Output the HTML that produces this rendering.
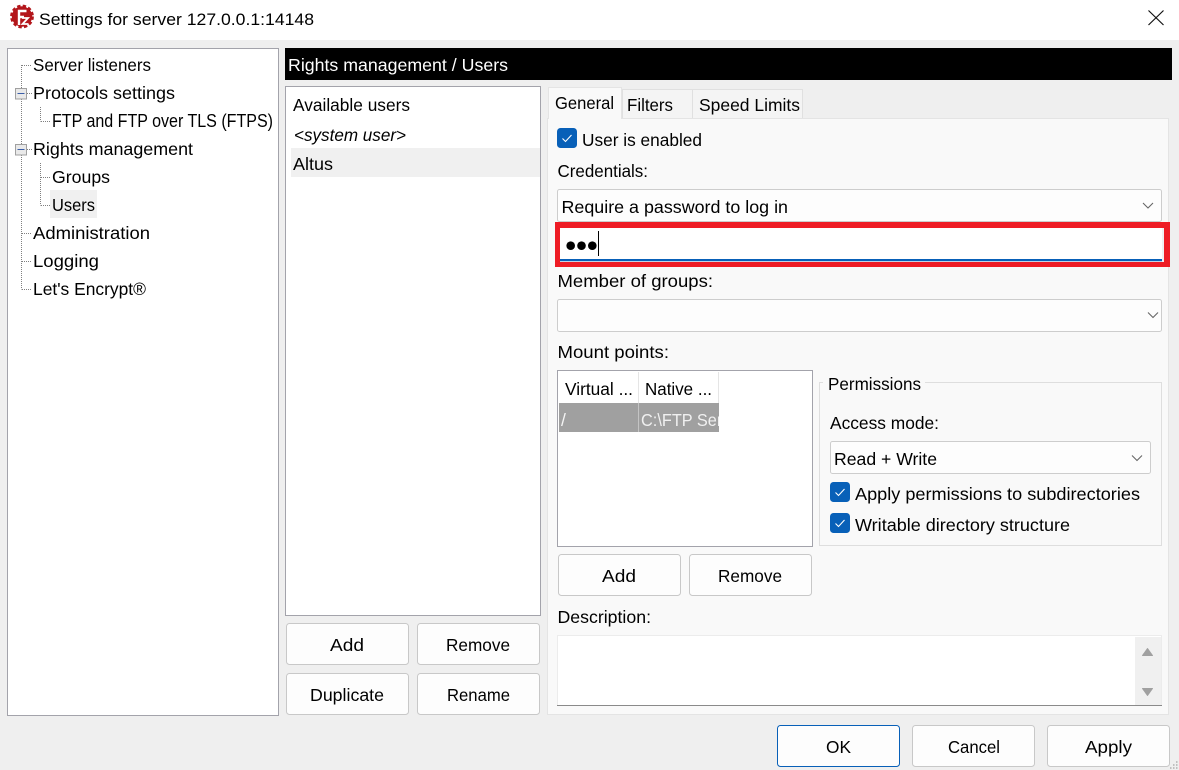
<!DOCTYPE html>
<html><head><meta charset="utf-8"><title>Settings for server 127.0.0.1:14148</title>
<style>
html,body{margin:0;padding:0;width:1179px;height:770px;overflow:hidden;background:#efefef}
svg{display:block}
text{font-family:"Liberation Sans",sans-serif;font-size:17.6px;fill:#000}
.b{fill:#fdfdfd;stroke:#c8c8c8;stroke-width:1}
.dd{fill:#fdfdfd;stroke:#cdcdcd;stroke-width:1}
.ch{fill:none;stroke:#666;stroke-width:1.1}
.ck{fill:none;stroke:#fff;stroke-width:1.1}
.dot{stroke:#808080;stroke-width:1;stroke-dasharray:1 1;fill:none}
.lst{fill:#fff;stroke:#a3a3ab;stroke-width:1}
</style></head><body>
<svg width="1179" height="770" viewBox="0 0 1179 770" xmlns="http://www.w3.org/2000/svg">
<rect width="1179" height="770" fill="#efefef"/>
<rect width="1179" height="40" fill="#fff"/>
<!-- logo -->
<circle cx="22" cy="16.5" r="10.2" fill="#b3161b"/>
<circle cx="22" cy="16.5" r="10.8" fill="none" stroke="#b3161b" stroke-width="2.2" stroke-dasharray="3.4 2.3"/>
<path d="M19 25V11h7.500M19 17h5" fill="none" stroke="#fff" stroke-width="2.400"/>
<path d="M22 18h6l-5.500 6h6" fill="none" stroke="#fff" stroke-width="1.800"/>
<text x="39" y="25" textLength="275" lengthAdjust="spacingAndGlyphs" style="font-size:17px">Settings for server 127.0.0.1:14148</text>
<path d="M1148.5 10.5L1163.5 25M1163.5 10.5L1148.5 25" stroke="#111" stroke-width="1.2" fill="none"/>

<!-- tree -->
<rect class="lst" x="7.5" y="48.5" width="271" height="667"/>
<path class="dot" d="M21.5 65V88M21.5 99V144M21.5 155V289.5M22 65.5h10M27 93.5h5M22 233.5h10M22 261.5h10M22 289.5h10M27 149.5h5"/>
<path class="dot" d="M40.5 107V121.5M41 121.5h10M40.5 163V205.5M41 177.5h10M41 205.5h10"/>
<rect x="15.5" y="88.5" width="11" height="10.5" fill="#e9e9e9" stroke="#a0a0a0"/>
<path d="M17.5 93.5h7" stroke="#3b5ea8" stroke-width="1"/>
<rect x="15.5" y="144.5" width="11" height="10.5" fill="#e9e9e9" stroke="#a0a0a0"/>
<path d="M17.5 149.5h7" stroke="#3b5ea8" stroke-width="1"/>
<rect x="50" y="190" width="47" height="28" fill="#f0f0f0"/>
<text x="33" y="71" textLength="118" lengthAdjust="spacingAndGlyphs">Server listeners</text>
<text x="33" y="99" textLength="142" lengthAdjust="spacingAndGlyphs">Protocols settings</text>
<text x="52" y="127" textLength="221" lengthAdjust="spacingAndGlyphs" style="font-size:18.200px">FTP and FTP over TLS (FTPS)</text>
<text x="33" y="155" textLength="160" lengthAdjust="spacingAndGlyphs">Rights management</text>
<text x="52" y="183" textLength="58" lengthAdjust="spacingAndGlyphs">Groups</text>
<text x="52" y="211" textLength="43" lengthAdjust="spacingAndGlyphs">Users</text>
<text x="33" y="239" textLength="117" lengthAdjust="spacingAndGlyphs">Administration</text>
<text x="33" y="267" textLength="66" lengthAdjust="spacingAndGlyphs">Logging</text>
<text x="33" y="295" textLength="113" lengthAdjust="spacingAndGlyphs">Let's Encrypt®</text>

<!-- header -->
<rect x="285" y="48" width="887" height="32" fill="#000"/>
<text x="288" y="71" textLength="220" lengthAdjust="spacingAndGlyphs" style="fill:#fff">Rights management / Users</text>

<!-- user list -->
<rect class="lst" x="285.5" y="86.5" width="255" height="529"/>
<rect x="291" y="148" width="249" height="29" fill="#f0f0f0"/>
<text x="293" y="111" textLength="117" lengthAdjust="spacingAndGlyphs">Available users</text>
<text x="294" y="141" textLength="112" lengthAdjust="spacingAndGlyphs" style="font-style:italic">&lt;system user&gt;</text>
<text x="293" y="170" textLength="40" lengthAdjust="spacingAndGlyphs">Altus</text>

<rect class="b" x="286.5" y="623.5" width="122" height="41" rx="3"/>
<rect class="b" x="417.5" y="623.5" width="122" height="41" rx="3"/>
<rect class="b" x="286.5" y="673.5" width="122" height="41" rx="3"/>
<rect class="b" x="417.5" y="673.5" width="122" height="41" rx="3"/>
<text x="330" y="651" textLength="34" lengthAdjust="spacingAndGlyphs">Add</text>
<text x="446" y="651" textLength="64" lengthAdjust="spacingAndGlyphs">Remove</text>
<text x="310" y="701" textLength="74" lengthAdjust="spacingAndGlyphs">Duplicate</text>
<text x="447" y="701" textLength="63" lengthAdjust="spacingAndGlyphs">Rename</text>

<!-- tabs -->
<rect x="547.5" y="118.5" width="621" height="596" fill="#f9f9f9" stroke="#e4e4e4"/>
<path d="M622.5 118V89.5H692.5V118M692.5 118V89.5H802.5V118" fill="#f4f4f4" stroke="#e0e0e0"/>
<path d="M548.5 119V87.5H621.5V119" fill="#f9f9f9" stroke="#e4e4e4"/>
<rect x="549" y="117" width="72" height="3" fill="#f9f9f9"/>
<text x="555" y="109" textLength="59" lengthAdjust="spacingAndGlyphs">General</text>
<text x="627" y="111" textLength="46" lengthAdjust="spacingAndGlyphs">Filters</text>
<text x="699" y="111" textLength="101" lengthAdjust="spacingAndGlyphs">Speed Limits</text>

<!-- user enabled -->
<rect x="557" y="128" width="20" height="20" rx="3.5" fill="#0860b8"/>
<path class="ck" d="M562.5 138.5l3 3 6-6.5"/>
<text x="582" y="146" textLength="120" lengthAdjust="spacingAndGlyphs">User is enabled</text>
<text x="557.500" y="177" textLength="90.500" lengthAdjust="spacingAndGlyphs">Credentials:</text>

<rect class="dd" x="557.5" y="189.5" width="604" height="32" rx="2"/>
<text x="561.500" y="213" textLength="226.500" lengthAdjust="spacingAndGlyphs">Require a password to log in</text>
<path class="ch" d="M1143 203l5 5 5-5"/>

<!-- password -->
<rect x="555" y="222" width="615" height="45" fill="#ee1c25"/>
<rect x="560" y="228" width="604" height="34" fill="#f0f0f2"/>
<rect x="560" y="228" width="602" height="32" fill="#fff"/>
<rect x="560" y="259" width="602" height="2.2" fill="#0860b8"/>
<circle cx="570.7" cy="245.7" r="4.3"/><circle cx="581.5" cy="245.7" r="4.3"/><circle cx="592.3" cy="245.7" r="4.3"/>
<rect x="598" y="231" width="1" height="25" fill="#000"/>

<text x="557.500" y="287" textLength="155.500" lengthAdjust="spacingAndGlyphs">Member of groups:</text>
<rect class="dd" x="557.5" y="299.5" width="604" height="32" rx="2"/>
<path class="ch" d="M1148 312.500l5 5 5-5"/>

<text x="557.500" y="358" textLength="111.500" lengthAdjust="spacingAndGlyphs">Mount points:</text>
<rect class="lst" x="557.5" y="370.5" width="255" height="176"/>
<path d="M638.500 372V403M718.500 372V403" stroke="#e5e5e5"/>
<text x="565" y="395" textLength="68" lengthAdjust="spacingAndGlyphs">Virtual ...</text>
<text x="645" y="395" textLength="67" lengthAdjust="spacingAndGlyphs">Native ...</text>
<rect x="559" y="403" width="160" height="29" fill="#a0a0a0"/>
<path d="M638.500 403V432" stroke="#c4c4c4"/>
<text x="561" y="426" style="fill:#f4f4f4">/</text>
<svg x="640" y="403" width="79" height="29"><text x="1" y="23" textLength="104" lengthAdjust="spacingAndGlyphs" style="fill:#f0f0f0">C:\FTP Server</text></svg>

<rect class="b" x="558.500" y="554.500" width="122" height="41" rx="3"/>
<rect class="b" x="689.500" y="554.500" width="122" height="41" rx="3"/>
<text x="602" y="582" textLength="34" lengthAdjust="spacingAndGlyphs">Add</text>
<text x="718" y="582" textLength="64" lengthAdjust="spacingAndGlyphs">Remove</text>

<!-- permissions -->
<rect x="819.500" y="382.500" width="342" height="163" fill="none" stroke="#dedede"/>
<rect x="823" y="378" width="102" height="8" fill="#f9f9f9"/>
<text x="828" y="390" textLength="93" lengthAdjust="spacingAndGlyphs">Permissions</text>
<text x="830" y="429" textLength="109" lengthAdjust="spacingAndGlyphs">Access mode:</text>
<rect class="dd" x="830.500" y="441.500" width="320" height="32" rx="2"/>
<text x="834" y="465" textLength="103" lengthAdjust="spacingAndGlyphs">Read + Write</text>
<path class="ch" d="M1132 455.500l5 5 5-5"/>
<rect x="830" y="482" width="20" height="20" rx="3.5" fill="#0860b8"/>
<path class="ck" d="M835.500 492.500l3 3 6-6.500"/>
<text x="855" y="500" textLength="285" lengthAdjust="spacingAndGlyphs">Apply permissions to subdirectories</text>
<rect x="830" y="513" width="20" height="20" rx="3.5" fill="#0860b8"/>
<path class="ck" d="M835.500 523.500l3 3 6-6.500"/>
<text x="855" y="531" textLength="215" lengthAdjust="spacingAndGlyphs">Writable directory structure</text>

<!-- description -->
<text x="557.500" y="623" textLength="93.500" lengthAdjust="spacingAndGlyphs">Description:</text>
<rect x="557.500" y="635.500" width="604" height="70" fill="#fff" stroke="#ececec"/>
<rect x="1135" y="637" width="26" height="68" fill="#f0f0f0"/>
<rect x="557" y="705" width="605" height="1" fill="#8a8a8a"/>
<path d="M1147.500 648.500l5 7h-10z" fill="#a0a0a0" stroke="#a0a0a0" stroke-linejoin="round"/>
<path d="M1147.500 695.500l5-7h-10z" fill="#a0a0a0" stroke="#a0a0a0" stroke-linejoin="round"/>

<!-- dialog buttons -->
<rect x="777.500" y="725.500" width="122" height="41" rx="3" fill="#fdfdfd" stroke="#0860b8"/>
<rect class="b" x="912.500" y="725.500" width="122" height="41" rx="3"/>
<rect class="b" x="1047.500" y="725.500" width="122" height="41" rx="3"/>
<text x="826" y="753" textLength="25" lengthAdjust="spacingAndGlyphs">OK</text>
<text x="948" y="753" textLength="52" lengthAdjust="spacingAndGlyphs">Cancel</text>
<text x="1085" y="753" textLength="47" lengthAdjust="spacingAndGlyphs">Apply</text>
<path d="M1176 762h1.500M1173 765h1.500M1176 765h1.500M1170 768h1.500M1173 768h1.500M1176 768h1.500" stroke="#b0b0b0" stroke-width="1.500"/>
</svg>
</body></html>
